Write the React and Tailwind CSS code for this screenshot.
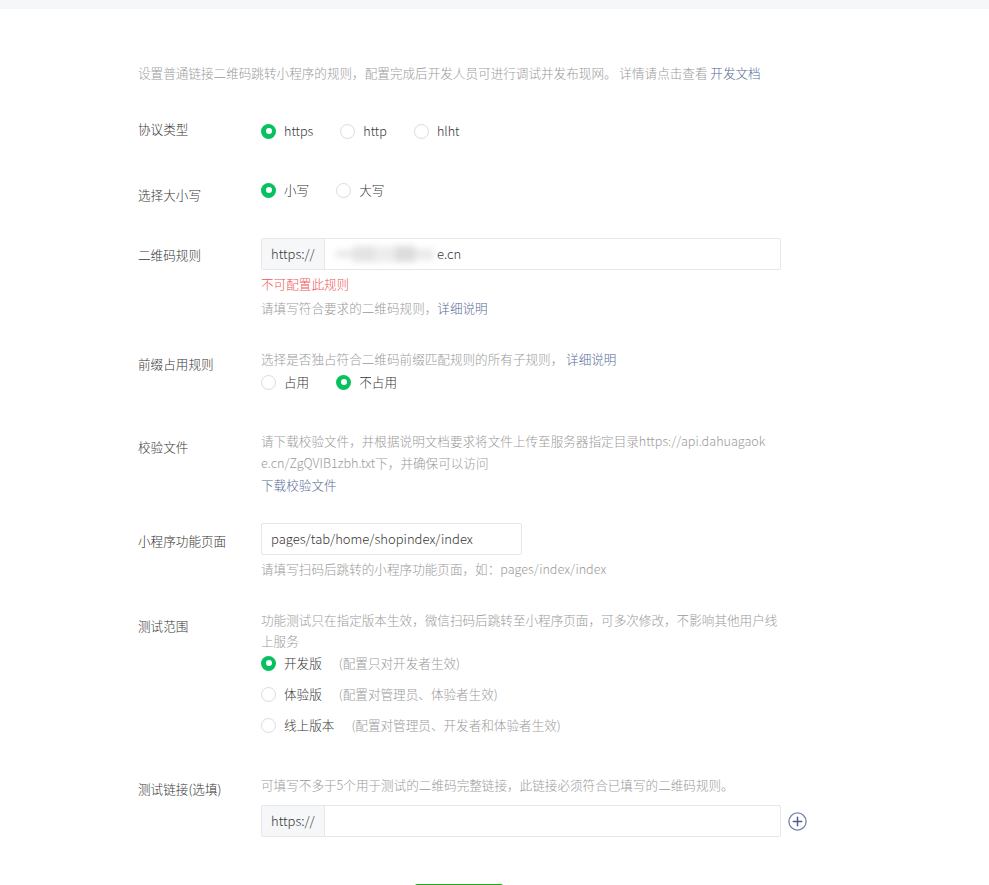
import React, { useState } from 'react';

const Radio = ({ checked, label, note, onClick, noteGap = 'ml-[17px]' }) => (
  <button type="button" onClick={onClick} className="flex items-center h-[22px] text-left">
    <span
      className={`w-[15px] h-[15px] rounded-full flex items-center justify-center shrink-0 ${
        checked ? 'bg-[#07c160]' : 'border border-[#dcdcdc] bg-white'
      }`}
    >
      {checked && <span className="w-[6px] h-[6px] rounded-full bg-white" />}
    </span>
    <span className="ml-[8px] text-[#353535]">{label}</span>
    {note && <span className={`${noteGap} text-[#9a9a9a]`}>{note}</span>}
  </button>
);

const PlusCircle = () => (
  <svg width="19" height="19" viewBox="0 0 19 19" fill="none">
    <circle cx="9.5" cy="9.5" r="8.6" stroke="#7383a8" strokeWidth="1.3" />
    <path d="M9.5 5.3v8.4M5.3 9.5h8.4" stroke="#4d5f8c" strokeWidth="1.5" strokeLinecap="round" />
  </svg>
);

export default function App() {
  const [protocol, setProtocol] = useState('https');
  const [letterCase, setLetterCase] = useState('lower');
  const [prefix, setPrefix] = useState('no');
  const [range, setRange] = useState('dev');

  return (
    <div
      className="min-h-[885px] bg-white text-[12.6px] font-light leading-[22px] text-[#353535] overflow-hidden"
      style={{ fontFamily: '"Noto Sans CJK SC", "Noto Sans", sans-serif' }}
    >
      <div className="h-[9px] bg-[#f6f7f9]" />

      <div className="pl-[138px]">
        {/* intro */}
        <p className="mt-[53px] text-[#9a9a9a]">
          设置普通链接二维码跳转小程序的规则，配置完成后开发人员可进行调试并发布现网。 详情请点击查看{' '}
          <a className="text-[#576b95]">开发文档</a>
        </p>

        {/* 协议类型 */}
        <div className="flex mt-[34px]">
          <div className="w-[123px] shrink-0">协议类型</div>
          <div className="flex gap-[27px] pt-[2px]">
            <Radio checked={protocol === 'https'} label="https" onClick={() => setProtocol('https')} />
            <Radio checked={protocol === 'http'} label="http" onClick={() => setProtocol('http')} />
            <Radio checked={protocol === 'hlht'} label="hlht" onClick={() => setProtocol('hlht')} />
          </div>
        </div>

        {/* 选择大小写 */}
        <div className="flex mt-[37px]">
          <div className="w-[123px] shrink-0 pt-[5px]">选择大小写</div>
          <div className="flex gap-[27px]">
            <Radio checked={letterCase === 'lower'} label="小写" onClick={() => setLetterCase('lower')} />
            <Radio checked={letterCase === 'upper'} label="大写" onClick={() => setLetterCase('upper')} />
          </div>
        </div>

        {/* 二维码规则 */}
        <div className="flex mt-[32px]">
          <div className="w-[123px] shrink-0 pt-[6px]">二维码规则</div>
          <div className="w-[520px]">
            <div className="flex h-[32px] border border-[#e7e7eb] rounded-[2px] text-[13px]">
              <div className="w-[63px] bg-[#f6f7f9] border-r border-[#e7e7eb] flex items-center pl-[9px]">
                https://
              </div>
              <div className="flex items-center pl-[10px]">
                {/* masked domain */}
                <span className="flex items-center h-[18px] blur-[3px]">
                  <span className="w-[18px] h-[8px] bg-[#e9e9e9] rounded-l-full" />
                  <span className="w-[22px] h-[16px] bg-[#e4e4e4]" />
                  <span className="w-[20px] h-[16px] bg-[#ededed]" />
                  <span className="w-[20px] h-[16px] bg-[#dcdcdc]" />
                  <span className="w-[20px] h-[11px] bg-[#eaeaea] rounded-r-full" />
                </span>
                <span className="ml-[2px]">e.cn</span>
              </div>
            </div>
            <div className="mt-[3px] text-[#f05555]">不可配置此规则</div>
            <div className="mt-[2px] text-[#9a9a9a]">
              请填写符合要求的二维码规则，<a className="text-[#576b95]">详细说明</a>
            </div>
          </div>
        </div>

        {/* 前缀占用规则 */}
        <div className="flex mt-[29px]">
          <div className="w-[123px] shrink-0 pt-[5px]">前缀占用规则</div>
          <div className="w-[520px]">
            <div className="text-[#9a9a9a]">
              选择是否独占符合二维码前缀匹配规则的所有子规则，{' '}
              <a className="text-[#576b95]">详细说明</a>
            </div>
            <div className="flex gap-[27px] mt-[1px]">
              <Radio checked={prefix === 'yes'} label="占用" onClick={() => setPrefix('yes')} />
              <Radio checked={prefix === 'no'} label="不占用" onClick={() => setPrefix('no')} />
            </div>
          </div>
        </div>

        {/* 校验文件 */}
        <div className="flex mt-[37px]">
          <div className="w-[123px] shrink-0 pt-[6px]">校验文件</div>
          <div className="w-[514px] break-all">
            <div className="text-[#9a9a9a]">
              请下载校验文件，并根据说明文档要求将文件上传至服务器指定目录https://api.dahuagaoke.cn/ZgQVIB1zbh.txt下，并确保可以访问
            </div>
            <a className="block text-[#576b95]">下载校验文件</a>
          </div>
        </div>

        {/* 小程序功能页面 */}
        <div className="flex mt-[27px]">
          <div className="w-[123px] shrink-0 pt-[7px]">小程序功能页面</div>
          <div className="w-[520px]">
            <div className="w-[261px] h-[32px] border border-[#e7e7eb] rounded-[2px] flex items-center pl-[9px] text-[13px]">
              pages/tab/home/shopindex/index
            </div>
            <div className="mt-[3px] text-[#9a9a9a]">请填写扫码后跳转的小程序功能页面，如：pages/index/index</div>
          </div>
        </div>

        {/* 测试范围 */}
        <div className="flex mt-[29px]">
          <div className="w-[123px] shrink-0 pt-[6px]">测试范围</div>
          <div className="w-[520px]">
            <div className="text-[#9a9a9a] leading-[21px]">
              功能测试只在指定版本生效，微信扫码后跳转至小程序页面，可多次修改，不影响其他用户线上服务
            </div>
            <div className="flex flex-col gap-[9px] mt-[1px]">
              <Radio checked={range === 'dev'} label="开发版" note="(配置只对开发者生效)" onClick={() => setRange('dev')} />
              <Radio checked={range === 'exp'} label="体验版" note="(配置对管理员、体验者生效)" onClick={() => setRange('exp')} />
              <Radio checked={range === 'online'} label="线上版本" note="(配置对管理员、开发者和体验者生效)" onClick={() => setRange('online')} />
            </div>
          </div>
        </div>

        {/* 测试链接 */}
        <div className="flex mt-[38px]">
          <div className="w-[123px] shrink-0 pt-[4px]">测试链接(选填)</div>
          <div>
            <div className="text-[#9a9a9a]">可填写不多于5个用于测试的二维码完整链接，此链接必须符合已填写的二维码规则。</div>
            <div className="flex items-center mt-[9px]">
              <div className="flex w-[520px] h-[32px] border border-[#e7e7eb] rounded-[2px] text-[13px]">
                <div className="w-[63px] bg-[#f6f7f9] border-r border-[#e7e7eb] flex items-center pl-[9px]">
                  https://
                </div>
                <div className="flex-1" />
              </div>
              <button type="button" className="ml-[7px] flex items-center">
                <PlusCircle />
              </button>
            </div>
          </div>
        </div>

        {/* submit */}
        <div className="mt-[47px] pl-[277px]">
          <button type="button" aria-label="保存" className="block w-[88px] h-[36px] bg-[#1aad19] rounded-[2px]" />
        </div>
      </div>
    </div>
  );
}
